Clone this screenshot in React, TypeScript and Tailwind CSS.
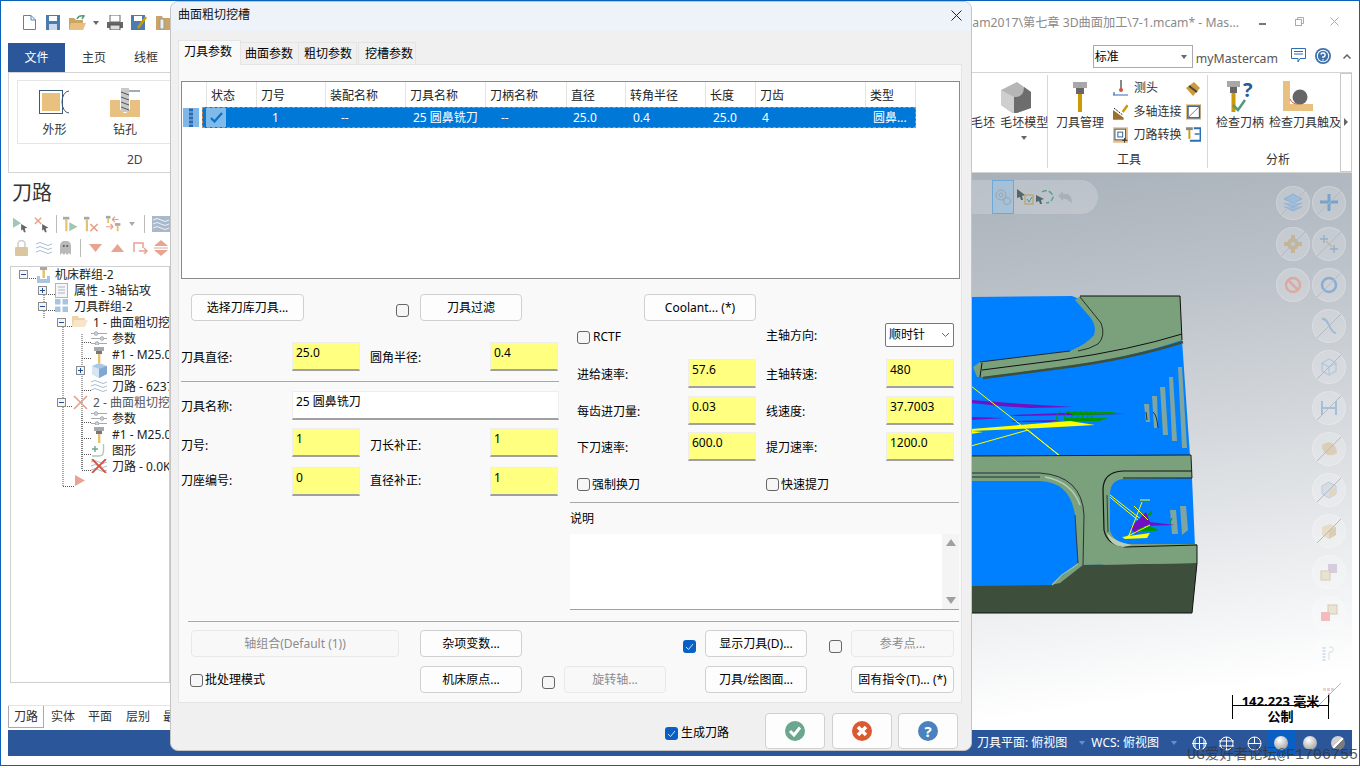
import type { ReactNode } from "react";

function ToolIco({ w = 14, h = 16 }: { w?: number; h?: number }) {
  return (
    <svg width={w} height={h} viewBox="0 0 14 16" className="shrink-0 block">
      <rect x="2" y="0" width="10" height="4" fill="#a8a8a8" />
      <rect x="4" y="4" width="6" height="3" fill="#777" />
      <rect x="6" y="7" width="2.4" height="9" fill="#e5c26c" />
    </svg>
  );
}

function Waves({ color = "#a9bdd4" }: { color?: string }) {
  return (
    <svg width="16" height="14" viewBox="0 0 16 14" className="shrink-0 block" fill="none" stroke={color} strokeWidth="1">
      <path d="M0 3 Q4 0 8 3 T16 3" />
      <path d="M0 7 Q4 4 8 7 T16 7" />
      <path d="M0 11 Q4 8 8 11 T16 11" />
    </svg>
  );
}

function Params() {
  return (
    <svg width="16" height="14" viewBox="0 0 16 14" className="shrink-0 block" stroke="#a9a9a9" fill="#c6d9ec">
      <path d="M0 2.500H16M0 7.500H16M0 12.500H16" />
      <circle cx="5" cy="2.500" r="1.800" />
      <circle cx="11" cy="7.500" r="1.800" />
      <circle cx="6" cy="12.500" r="1.800" />
    </svg>
  );
}

function Expander({ plus }: { plus?: boolean }) {
  return (
    <span className="w-[9px] h-[9px] shrink-0 border border-[#8a8a8a] bg-[#f4f4f4] flex items-center justify-center relative">
      <span className="w-[5px] h-px bg-[#1b4f9c]" />
      {plus && <span className="absolute w-px h-[5px] bg-[#1b4f9c]" />}
    </span>
  );
}

const XIco = () => (
  <svg width="15" height="15" viewBox="0 0 15 15" className="shrink-0 block" stroke="#ea9d87" strokeWidth="1.600">
    <path d="M1 1L14 14M14 1L1 14" />
  </svg>
);

type TreeRow = { left: number; exp?: "plus" | "minus"; icon: ReactNode; iconLeft: number; text?: string; textLeft: number; faded?: boolean };

const treeRows: TreeRow[] = [
  {
    left: 19, exp: "minus", iconLeft: 37, textLeft: 55, text: "机床群组-2",
    icon: <svg width="14" height="16" viewBox="0 0 14 16"><rect x="3" y="0" width="7" height="3" fill="#a8a8a8" /><rect x="5.500" y="3" width="2.400" height="8" fill="#e5c26c" /><path d="M0 9H3V12H10V9H13V16H0Z" fill="#a9c4e0" /></svg>,
  },
  {
    left: 38, exp: "plus", iconLeft: 55, textLeft: 74, text: "属性 - 3轴钻攻",
    icon: <svg width="13" height="15" viewBox="0 0 13 15" fill="#f6f6f6" stroke="#a9b6c4"><rect x="0.500" y="0.500" width="12" height="14" /><path d="M3 4H10M3 7H10M3 10H10" /></svg>,
  },
  {
    left: 38, exp: "minus", iconLeft: 55, textLeft: 74, text: "刀具群组-2",
    icon: <svg width="13" height="13" viewBox="0 0 13 13" fill="#a9c4e0"><rect width="5.500" height="5.500" /><rect x="7.500" width="5.500" height="5.500" /><rect y="7.500" width="5.500" height="5.500" /><rect x="7.500" y="7.500" width="5.500" height="5.500" /></svg>,
  },
  {
    left: 57, exp: "minus", iconLeft: 72, textLeft: 93, text: "1 - 曲面粗切挖",
    icon: <svg width="16" height="12" viewBox="0 0 16 12"><path d="M0 1H6L7 3H13V12H0Z" fill="#eed3a8" /><path d="M2 5H16L13 12H0Z" fill="#f8e5c8" /></svg>,
  },
  { left: 76, iconLeft: 91, textLeft: 112, text: "参数", icon: <Params /> },
  { left: 76, iconLeft: 92, textLeft: 112, text: "#1 - M25.00", icon: <ToolIco /> },
  {
    left: 76, exp: "plus", iconLeft: 92, textLeft: 112, text: "图形",
    icon: <svg width="15" height="15" viewBox="0 0 15 15"><path d="M7 0L15 3V11L7 15L0 11V3Z" fill="#a9c7e6" /><path d="M0 3L7 6V15L0 11Z" fill="#d8e6f4" /><path d="M7 6L15 3V11L7 15Z" fill="#7fa8d0" /></svg>,
  },
  { left: 76, iconLeft: 91, textLeft: 112, text: "刀路 - 6237", icon: <Waves /> },
  { left: 57, exp: "minus", iconLeft: 73, textLeft: 93, text: "2 - 曲面粗切挖", icon: <XIco />, faded: true },
  { left: 76, iconLeft: 91, textLeft: 112, text: "参数", icon: <Params /> },
  { left: 76, iconLeft: 92, textLeft: 112, text: "#1 - M25.00", icon: <ToolIco /> },
  {
    left: 76, iconLeft: 92, textLeft: 112, text: "图形",
    icon: <svg width="15" height="15" viewBox="0 0 15 15" fill="none" stroke="#a8ccb8" strokeWidth="1.400"><path d="M11.500 1V8Q11.500 13 7 13H0" /><path d="M3 3V9M0 6H6" stroke="#6fa98c" /></svg>,
  },
  {
    left: 76, iconLeft: 91, textLeft: 112, text: "刀路 - 0.0K",
    icon: <span className="relative block w-4 h-[14px]"><Waves /><svg width="16" height="14" viewBox="0 0 16 14" className="absolute inset-0" stroke="#d9513a" strokeWidth="1.800"><path d="M1 0L15 14M15 0L1 14" /></svg></span>,
  },
  {
    left: 57, iconLeft: 75, textLeft: 93,
    icon: <svg width="10" height="11" viewBox="0 0 10 11"><path d="M0 0L10 5.500L0 11Z" fill="#e8a393" /></svg>,
  },
];

function Tree() {
  return (
    <div className="mt-[6px] ml-[2px] h-[417px] border border-[#cfcfcf] bg-white relative overflow-hidden">
      {/* connector lines */}
      <svg className="absolute left-0 top-[2px]" width="170" height="240" fill="none" stroke="#555" strokeDasharray="1 1">
        <path d="M14 9.500H26M33 20V50M33 25.500H45M33 41.500H45M52 50V217M52 57.500H62M71 65V201M71 73.500H81M71 89.500H81M71 105.500H74M71 121.500H81M52 137.500H62M71 145V201M71 153.500H81M71 169.500H81M71 185.500H81M71 201.500H81M52 217.500H64" />
      </svg>
      {treeRows.map((r, i) => (
        <div key={i} className="relative h-4 text-[12px] leading-4 text-[#222] whitespace-nowrap first:mt-[3px]">
          {r.exp && <span className="absolute top-[3px]" style={{ left: r.left - 11 }}><Expander plus={r.exp === "plus"} /></span>}
          <span className="absolute top-0" style={{ left: r.iconLeft - 11 }}>{r.icon}</span>
          {r.text && <span className={`absolute top-0 right-0 overflow-hidden ${r.faded ? "text-[#555]" : ""}`} style={{ left: r.textLeft - 11 }}>{r.text}</span>}
        </div>
      ))}
    </div>
  );
}

function LeftToolbars() {
  return (
    <div className="pl-[5px]">
      <div className="flex items-center h-6 gap-[6px] overflow-hidden">
        <svg width="17" height="17" viewBox="0 0 17 17"><path d="M0 1L9 7L0 12Z" fill="#9fc7b2" /><path d="M9 8L16 12L13 13L14 17L12 17L11 14L9 15Z" fill="#666" /></svg>
        <svg width="17" height="17" viewBox="0 0 17 17"><path d="M1 1L8 8M8 1L1 8" stroke="#ea9d87" strokeWidth="1.500" /><path d="M9 8L16 12L13 13L14 17L12 17L11 14L9 15Z" fill="#666" /></svg>
        <span className="w-px h-[18px] bg-[#bbb]" />
        <svg width="17" height="17" viewBox="0 0 17 17"><rect x="0" y="0" width="7" height="3" fill="#a8a8a8" /><rect x="2.500" y="3" width="2.400" height="13" fill="#e5c26c" /><path d="M7 6L16 11L7 16Z" fill="#9fc7b2" /></svg>
        <svg width="17" height="17" viewBox="0 0 17 17"><rect x="0" y="0" width="6" height="3" fill="#a8a8a8" /><rect x="2" y="3" width="2.400" height="13" fill="#e5c26c" /><path d="M7 8L15 16M15 8L7 16" stroke="#ea9d87" strokeWidth="1.800" /></svg>
        <svg width="24" height="18" viewBox="0 0 24 18"><rect x="1" y="0" width="5" height="3" fill="#a8a8a8" /><rect x="2.500" y="3" width="2" height="5" fill="#e5c26c" /><rect x="11" y="8" width="6" height="3" fill="#a8a8a8" /><rect x="13" y="11" width="2" height="6" fill="#e5c26c" /><path d="M8 4H15M8 4L11 1M8 4L11 7M1 12H9M9 12L6 9M9 12L6 15" stroke="#ea9d87" strokeWidth="1.300" fill="none" /></svg>
        <span className="w-0 h-0 -ml-[4px] border-x-[3px] border-x-transparent border-t-[4px] border-t-[#aaa]" />
        <span className="w-px h-[18px] bg-[#bbb] ml-[3px]" />
        <span className="bg-[#a9b9cc] p-px ml-px"><Waves color="#eef2f6" /></span>
      </div>
      <div className="flex items-center h-6 overflow-hidden">
        <svg width="13" height="16" viewBox="0 0 13 16" className="ml-[2px]"><path d="M3 7V4a3.500 3.500 0 0 1 7 0V7" fill="none" stroke="#ccc" strokeWidth="1.500" /><rect y="7" width="13" height="9" rx="1" fill="#dcc6a0" /></svg>
        <span className="ml-2"><Waves /></span>
        <svg width="11" height="14" viewBox="0 0 11 14" className="ml-[8px]"><path d="M0 14V5a5.500 5.500 0 0 1 11 0V14L9 12L7 14L5.500 12L4 14L2 12Z" fill="#b9b9b9" /><circle cx="3.800" cy="5" r="1" fill="#555" /><circle cx="7.200" cy="5" r="1" fill="#555" /></svg>
        <span className="w-px h-[18px] bg-[#bbb] ml-[9px]" />
        <svg width="13" height="8" viewBox="0 0 13 8" className="ml-[8px] shrink-0"><path d="M0 0H13L6.500 8Z" fill="#e8a393" /></svg>
        <svg width="13" height="8" viewBox="0 0 13 8" className="ml-[9px] shrink-0"><path d="M0 8H13L6.500 0Z" fill="#e8a393" /></svg>
        <svg width="15" height="12" viewBox="0 0 15 12" className="ml-[9px] shrink-0" fill="none" stroke="#e8a393" strokeWidth="1.500"><path d="M1 10V1H10V6" /><path d="M6 9H14M11 6L14 9L11 12" /></svg>
        <svg width="14" height="16" viewBox="0 0 14 16" className="ml-[6px] shrink-0"><path d="M0 6L7 0L14 6ZM0 10L7 16L14 10Z" fill="#e8a393" /><path d="M0 8H14" stroke="#e8a393" /></svg>
      </div>
    </div>
  );
}

function Ribbon() {
  return (
    <div className="h-[101px] mx-[7px] flex border border-[#d4d4d4] border-r-0 bg-white text-[12px] text-[#333]">
      <div className="w-[170px] shrink-0">
        <div className="mt-[7px] ml-2 h-[64px] border border-[#e6e6e6] flex">
          <div className="w-[73px] pt-[9px] flex flex-col items-center">
            <svg width="31" height="24" viewBox="0 0 31 24"><rect x="0.500" y="0.500" width="23" height="23" fill="#fff" stroke="#3b5a78" /><rect x="3" y="3" width="18" height="18" fill="#e8c080" /><path d="M30 1A7 11 0 0 0 30 23" fill="none" stroke="#3b5a78" /></svg>
            <span className="mt-[8px] leading-4">外形</span>
          </div>
          <div className="w-[68px] pt-[7px] flex flex-col items-center">
            <svg width="30" height="29" viewBox="0 0 30 29"><path d="M0 12H10V21Q15 29 20 21V12H30V29H0Z" fill="#e8c080" /><rect x="11" y="0" width="8" height="24" fill="#c9c9c9" /><path d="M11 4L19 7M11 9L19 12M11 14L19 17M11 19L19 22" stroke="#555" /><path d="M19 3H30" stroke="#3b5a78" /></svg>
            <span className="leading-4 mt-[5px]">钻孔</span>
          </div>
        </div>
        <div className="mt-[8px] pl-[118px] leading-4 text-[#444]">2D</div>
      </div>
      <div className="flex-1" />
      <div className="w-[76px] shrink-0 relative">
        <svg width="32" height="32" viewBox="0 0 32 32" className="absolute left-[29px] top-[8px]"><path d="M1 9L17 1L31 11L31 27L14 33L1 24Z" fill="#b6b6b6" /><path d="M1 9L14 16L14 33L1 24Z" fill="#cfcfcf" /><path d="M14 16Q24 17 24 6L31 11V27L14 33Z" fill="#6d6d6d" /></svg>
        <div className="absolute left-0 top-[42px] leading-4 whitespace-nowrap">毛坯 <span className="ml-[2px]">毛坯模型</span></div>
        <span className="absolute left-[50px] top-[63px] w-0 h-0 border-x-[3px] border-x-transparent border-t-[4px] border-t-[#666]" />
      </div>
      <div className="w-px mt-[2px] mb-[4px] bg-[#d8d8d8]" />
      <div className="w-[159px] shrink-0 relative">
        <div className="absolute left-[25px] top-[9px]">
          <svg width="14" height="30" viewBox="0 0 14 30"><rect width="14" height="6" fill="#a8a8a8" /><rect x="3" y="6" width="8" height="6" fill="#666" /><rect x="5" y="12" width="4" height="18" fill="#cc9a05" /></svg>
        </div>
        <div className="absolute left-[8px] top-[42px] leading-4">刀具管理</div>
        <div className="absolute left-[65px] top-[7px] w-[88px] flex flex-col gap-[7.500px]">
          <div className="flex h-4 items-center gap-[4px]">
            <svg width="16" height="16" viewBox="0 0 16 16"><path d="M8 0V9" stroke="#888" strokeWidth="2" /><circle cx="8" cy="10" r="2" fill="#d9513a" /><path d="M0 15H15M1 15V12" stroke="#2d6fb5" strokeWidth="1.200" /></svg>
            <span className="leading-4 ml-[1px]">测头</span>
            <svg width="16" height="15" viewBox="0 0 16 15" className="ml-auto"><path d="M1 7L9 1L15 7L8 15Z" fill="#cc9a3a" /><path d="M4 5L12 11" stroke="#444" strokeWidth="2" /></svg>
          </div>
          <div className="flex h-4 items-center gap-[4px]">
            <svg width="16" height="16" viewBox="0 0 16 16"><path d="M0 6L11 14V16H0Z" fill="#9c6e2f" /><path d="M1 4L10 11" stroke="#222" strokeDasharray="2 1" /><path d="M10 8L15 1" stroke="#cc9a05" strokeWidth="2.500" /></svg>
            <span className="leading-4 ml-[1px] whitespace-nowrap">多轴连接</span>
            <svg width="16" height="16" viewBox="0 0 16 16" className="ml-auto"><rect width="16" height="16" fill="#e8c080" /><rect x="2" y="2" width="12" height="12" fill="#fff" stroke="#2d5f99" strokeWidth="1.500" /><path d="M1 15L15 1" stroke="#d9513a" /></svg>
          </div>
          <div className="flex h-4 items-center gap-[4px]">
            <svg width="16" height="16" viewBox="0 0 16 16"><rect width="16" height="16" fill="#e8c080" /><rect x="2" y="2" width="11" height="11" fill="#fff" stroke="#2d5f99" /><rect x="5" y="5" width="5" height="5" fill="none" stroke="#2d5f99" /><path d="M12 11V16M9.500 13.500H15" stroke="#333" /></svg>
            <span className="leading-4 ml-[1px] whitespace-nowrap">刀路转换</span>
            <svg width="16" height="16" viewBox="0 0 16 16" className="ml-auto"><rect width="7" height="3" fill="#888" /><rect x="2.500" y="3" width="2" height="9" fill="#cc9a05" /><path d="M8 1H15V14H4" fill="none" stroke="#2d6fb5" strokeWidth="2" /><path d="M9 7H14" stroke="#2d6fb5" strokeWidth="1.500" /></svg>
          </div>
        </div>
        <div className="absolute left-[69px] top-[79px] leading-4">工具</div>
      </div>
      <div className="w-px mt-[2px] mb-[4px] bg-[#d8d8d8]" />
      <div className="w-[132px] shrink-0 relative whitespace-nowrap">
        <svg width="30" height="32" viewBox="0 0 30 32" className="absolute left-[19px] top-[8px]"><rect width="13" height="6" fill="#a8a8a8" /><rect x="3" y="6" width="7" height="6" fill="#666" /><rect x="4.500" y="12" width="4" height="19" fill="#cc9a05" /><path d="M6 24L11 29L18 19" fill="none" stroke="#4f9b7c" strokeWidth="2.500" /></svg>
        <span className="absolute left-[35px] top-[1px] text-[20px] font-bold text-[#2b5c91] leading-[32px]">?</span>
        <svg width="30" height="30" viewBox="0 0 30 30" className="absolute left-[75px] top-[8px]"><path d="M0 0H7V23H30V30H0Z" fill="#e8c080" /><circle cx="17" cy="16" r="7.500" fill="#666" /><path d="M7 18Q9 23 15 23" fill="none" stroke="#d9513a" /></svg>
        <span className="absolute left-[8px] top-[42px] leading-4">检查刀柄</span>
        <span className="absolute left-[61px] top-[42px] leading-4">检查刀具触及</span>
        <span className="absolute left-[58px] top-[79px] leading-4">分析</span>
      </div>
      <div className="w-[12px] shrink-0 border border-[#c9c9c9] flex items-center justify-center pb-[1px]">
        <span className="w-0 h-0 border-y-[4px] border-y-transparent border-l-[4px] border-l-[#666]" />
      </div>
    </div>
  );
}

const roundIcons: ReactNode[] = [
  <path key="a" d="M3 11H21M12 3V20" stroke="#5e94c9" strokeWidth="3" />,
  <g key="b" stroke="#7fa4c8" strokeWidth="1.400"><path d="M7 3V11M3 7H11M17 13V21M13 17H21" /><path d="M9 9L15 15" stroke="#c4ad80" /></g>,
  <g key="c" fill="none" stroke="#6f9fd0" strokeWidth="2.500"><circle cx="12" cy="12" r="7" /></g>,
  <path key="d" d="M5 5C12 3 12 19 19 19" fill="none" stroke="#8db0d0" strokeWidth="2" />,
  <path key="e" d="M5 8L12 4L19 8V16L12 20L5 16ZM5 8L12 12L19 8M12 12V20" fill="none" stroke="#a9c2da" strokeWidth="1.400" />,
  <path key="f" d="M5 5V19M19 5V19M5 12H19" fill="none" stroke="#8fb2d2" strokeWidth="2" />,
  <path key="g" d="M5 8Q12 3 16 7T20 16Q13 20 9 17T5 8" fill="#d9c6a4" />,
  <g key="h"><path d="M5 8L12 4L19 8V16L12 20L5 16Z" fill="#cfd9e2" stroke="#a9c2da" /><path d="M12 12L19 8V16L12 20Z" fill="#e2cfb0" /></g>,
  <g key="i"><path d="M5 8L13 5L19 8V16L12 20L5 16Z" fill="#e4d6b8" /><path d="M12 11L19 8V16L12 20Z" fill="#d4c09a" /></g>,
  <g key="j"><rect x="11" y="4" width="9" height="9" fill="#cbbcd6" /><rect x="4" y="11" width="9" height="9" fill="#e6dcc6" stroke="#c9b998" /></g>,
  <g key="k"><rect x="11" y="4" width="9" height="9" fill="#e6dcc6" stroke="#c9b998" /><rect x="4" y="11" width="9" height="9" fill="#f3a3a6" /></g>,
  <g key="l"><path d="M7 5V20" stroke="#c6d8ea" strokeWidth="3" strokeDasharray="2 1" /><path d="M12 5H15Q18 7 15 10H12V18" fill="none" stroke="#c9d4de" /></g>,
  <g key="m"><rect x="6" y="5" width="3" height="3" fill="#e8c9b0" /><rect x="10" y="5" width="3" height="3" fill="#e6b9b9" /><rect x="14" y="5" width="3" height="3" fill="#bcd0c4" /><path d="M12 10V20" stroke="#c04060" /></g>,
];

function RoundBtn({ children, slash = true }: { children: ReactNode; slash?: boolean }) {
  return (
    <span className="w-[34px] h-[34px] rounded-full bg-white/20 border border-white/20 relative flex items-center justify-center">
      <svg width="24" height="24" viewBox="0 0 24 24" className="opacity-70">{children}</svg>
      {slash && <svg width="34" height="34" viewBox="0 0 34 34" className="absolute -inset-px"><path d="M5 29L29 5" stroke="#b3bac1" strokeWidth="1" /></svg>}
    </span>
  );
}

function CadDrawing() {
  return (
    <svg className="absolute inset-0" width="1182" height="557" viewBox="170 173 1182 557">
      <path d="M971 297L1072 296L1182 340L1190 456L1192 478L1195 546L1100 565L1060 586L971 586Z" fill="#0080ff" />
      {/* upper rib */}
      <path d="M1075 300L1080 296L1180 296L1182 340Q1130 358 1060 367L983 377L977 377L973 367L980 362L1070 351Q1087 344 1094 335Q1097 326 1090 317Z" fill="#7aa07c" />
      <path d="M1080 296H1180L1182 340" fill="none" stroke="#111" />
      <path d="M1183 342Q1130 359 1060 368L983 378" fill="none" stroke="#3d4f3a" strokeWidth="2.500" />
      <path d="M982 370L1060 360Q1130 350 1182 334" fill="none" stroke="#111" />
      <path d="M980 362L1070 351M1080 297L1101 323Q1106 336 1098 344Q1090 349 1078 351" fill="none" stroke="#111" strokeWidth="0.800" />
      <path d="M982 363L980 377" stroke="#111" />
      {/* stepped walls */}
      {[
        "M1178 367L1182 367L1187 448L1182 448Z",
        "M1169 377L1173 377L1177 441L1172 441Z",
        "M1160 387L1165 387L1168 435L1163 435Z",
        "M1152 396L1157 396L1158 428L1154 428Z",
        "M1144 404L1149 404L1150 422L1146 422Z",
      ].map((d) => (
        <path key={d} d={d} fill="#7fa5a0" />
      ))}
      <path d="M1153 412Q1157 415 1158 428M1146 412L1147 420" fill="none" stroke="#111" strokeWidth="0.800" />
      {/* tool motion */}
      <path d="M971 400L1010 403L1073 407L1030 408L1000 406L971 403Z" fill="#7010c0" />
      <path d="M1010 415L1090 412L1125 414L1080 415L1015 416Z" fill="#7010c0" />
      <path d="M971 417L1005 418L971 420ZM1010 421L1060 420L1050 422L1015 422Z" fill="#7010c0" />
      <path d="M1065 412L1112 412L1120 414L1075 415ZM1065 418L1108 418L1100 421L1065 421Z" fill="#009a00" />
      {[1055, 1063, 1070, 1076, 1081, 1086, 1090].map((x) => (
        <path key={x} d={`M${x + 6} 411Q${x} 414 ${x + 2} 421`} fill="none" stroke="#009a00" />
      ))}
      <path d="M971 429L1045 423L1070 421L1095 425L1040 428L971 431Z" fill="#ffff00" />
      <path d="M971 431L983 432L971 434Z" fill="#ffff00" />
      <path d="M971 386L1142 520M971 446L1028 430M1028 430L1150 530" stroke="#ffff00" strokeWidth="1" fill="none" />
      {/* lower rib */}
      <path d="M971 456L1191 455L1192 478L1123 479Q1110 480 1110 495L1110 530Q1113 542 1127 544L1197 544L1197 563L1083 565L1060 584L1050 586L1052 585L1078 563L1075 515Q1070 482 1040 481L971 481Z" fill="#7aa07c" />
      <path d="M971 456L1191 455L1192 478M1123 478H1192" fill="none" stroke="#111" strokeWidth="0.900" />
      <path d="M971 473H1040Q1082 476 1084 515L1083 565M971 477H1040" fill="none" stroke="#223" strokeWidth="0.900" />
      <path d="M1192 471L1123 471Q1103 472 1103 490L1104 530Q1107 545 1125 547L1197 545" fill="none" stroke="#111" strokeWidth="1.200" />
      <path d="M1107 495L1108 532M1075 515L1078 563" stroke="#223" strokeWidth="0.800" />
      <path d="M1107 533Q1115 542 1132 545L1123 547Q1110 546 1107 533Z" fill="#b7cdb5" />
      <path d="M1045 477Q1072 482 1080 505" fill="none" stroke="#b4cfb4" strokeWidth="1.500" />
      {/* front face */}
      <path d="M1083 565L1197 563L1192 613L971 613L971 586L1050 585L1060 583Z" fill="#3d4f3a" />
      <path d="M1197 545V563L1192 613H971" fill="none" stroke="#111" />
      <path d="M1052 585L1062 575L1078 564" stroke="#9dbb9d" strokeWidth="1.500" fill="none" />
      {/* pocket detail */}
      <path d="M1180 506L1186 506L1188 530L1182 535ZM1170 510L1176 510L1178 534L1172 534Z" fill="#7fa5a0" />
      <path d="M1122 537L1150 533L1147 538L1125 539Z" fill="#ffff00" />
      <path d="M1130 528L1146 512L1150 522L1175 525L1145 526L1136 534Z" fill="#7010c0" />
      <path d="M1137 530L1148 526L1158 530L1144 531ZM1148 516L1150 511L1152 514M1170 523L1172 518" stroke="#009a00" fill="#009a00" />
      <path d="M1142 502L1128 538M1134 506L1148 520M1126 537L1150 525M1140 500H1150" stroke="#ffff00" fill="none" />
    </svg>
  );
}

function Viewport() {
  return (
    <div className="flex-1 relative overflow-hidden bg-[linear-gradient(172deg,#98a3ae_0%,#bcc2c9_35%,#dfe2e5_65%,#ffffff_92%)]">
      <CadDrawing />
      {/* selection toolbar */}
      <div className="absolute left-[790px] top-[7px] w-[138px] h-[34px] rounded-r-[17px] bg-white/20 flex items-center pl-[32px]">
        <span className="w-[22px] h-[34px] bg-[#9dc0dc]/70 border border-[#6fa7d6] flex items-center justify-center">
          <svg width="16" height="16" viewBox="0 0 16 16" fill="none" stroke="#9aa5ae"><circle cx="6" cy="6" r="5" /><circle cx="6" cy="6" r="2" /><circle cx="12" cy="12" r="3.500" /></svg>
        </span>
        <svg width="18" height="16" viewBox="0 0 18 16" className="ml-[3px]"><path d="M0 0L8 6L5 7L6 11L4 11L3 8L0 9Z" fill="#566" /><rect x="8" y="6" width="8" height="9" fill="none" stroke="#b79a5d" /><path d="M10 10L12 13L15 8" stroke="#4f9b7c" fill="none" /></svg>
        <svg width="18" height="16" viewBox="0 0 18 16" className="ml-[1px]"><path d="M0 6L8 10L5 11L6 15L4 15L3 12L0 13Z" fill="#566" /><path d="M6 3A7 7 0 0 1 17 8A7 7 0 0 1 10 14" fill="none" stroke="#5f9f86" strokeWidth="1.500" strokeDasharray="5 2" /></svg>
        <svg width="18" height="16" viewBox="0 0 18 16" className="ml-[3px]"><path d="M1 7L6 2V5H11L14 8L15 14L9 10L6 10V12Z" fill="#a9b0b6" /></svg>
      </div>
      {/* overlay buttons */}
      <div className="absolute right-[6px] top-[13px] flex gap-[2px]">
        <div className="flex flex-col gap-[7px]">
          <RoundBtn><path d="M12 3L21 8L12 12L3 8ZM3 12L12 16L21 12M3 15.500L12 20L21 15.500" fill="#8fb7e0" stroke="#7aa7d5" /></RoundBtn>
          <RoundBtn><g fill="#c4ad80"><circle cx="12" cy="12" r="6" /><circle cx="12" cy="12" r="2" fill="#ccc" /><path d="M10 3H14V7H10ZM10 17H14V21H10ZM3 10H7V14H3ZM17 10H21V14H17Z" /></g></RoundBtn>
          <RoundBtn slash={false}><g fill="none" stroke="#e39a8a" strokeWidth="2.500"><circle cx="12" cy="12" r="7" /><path d="M7 7L17 17" /></g></RoundBtn>
        </div>
        <div className="flex flex-col gap-[7px]">
          {roundIcons.map((ic, i) => (
            <RoundBtn key={i} slash={i !== 9 && i !== 10 && i !== 11}>{ic}</RoundBtn>
          ))}
        </div>
      </div>
      {/* scale bar */}
      <div className="absolute left-[1062px] top-[522px] w-[97px] h-[24px] border-x border-black text-black text-[13px] leading-[12px] font-bold text-center whitespace-nowrap">
        <div className="h-[11px] border-b border-black -mb-px">142.223 毫米</div>
        <div className="mt-[5px]">公制</div>
      </div>
    </div>
  );
}

function Wire({ d }: { d: string }) {
  return (
    <svg width="15" height="15" viewBox="0 0 15 15" fill="none" stroke="#fff" className="block">
      <circle cx="7.500" cy="7.500" r="6.500" />
      <path d={d} />
    </svg>
  );
}

const Sphere = () => <span className="block w-[14px] h-[14px] rounded-full bg-[radial-gradient(circle_at_40%_30%,#ffffff,#a8a8a8_75%)]" />;

function StatusBar() {
  return (
    <div className="h-[26px] mx-[7px] bg-[#2b579a] flex items-center text-[12px] text-white whitespace-nowrap">
      <span className="ml-[969px]">刀具平面: 俯视图</span>
      <span className="ml-[12px] w-0 h-0 border-x-[3px] border-x-transparent border-t-[4px] border-t-[#6d8fc0]" />
      <span className="ml-[6px]">WCS: 俯视图</span>
      <span className="ml-[12px] w-0 h-0 border-x-[3px] border-x-transparent border-t-[4px] border-t-[#6d8fc0]" />
      <span className="ml-[15px]"><Wire d="M0 7.500H15M7.500 1V14M3 3V12M12 3V12" /></span>
      <span className="ml-[12px]"><Wire d="M0 5H15M0 10H15M7.500 1V14" /></span>
      <span className="ml-[13px]"><Wire d="M1 7.500H14M7.500 1V8" /></span>
      <span className="ml-[6px] w-[27px] h-[26px] bg-[#0a5fc4] flex items-center justify-center"><Sphere /></span>
      <span className="ml-[8px]"><Sphere /></span>
      <span className="ml-[14px] w-[14px] h-[14px] rounded-full bg-[linear-gradient(135deg,#d0d0d0_45%,#ffffff_45%,#ffffff_55%,#7c7c7c_55%)]" />
    </div>
  );
}

function Btn({ w, children, disabled }: { w: number; children: ReactNode; disabled?: boolean }) {
  return (
    <button
      style={{ width: w }}
      className={`block h-[27px] shrink-0 rounded-[4px] border text-[12px] whitespace-nowrap ${disabled ? "border-[#e8e8e8] bg-[#f8f8f8] text-[#8c8c8c]" : "border-[#d0d0d0] bg-[#fdfdfd] text-black"}`}
    >
      {children}
    </button>
  );
}

function Check({ checked }: { checked?: boolean }) {
  if (checked)
    return (
      <span className="block w-[13px] h-[13px] shrink-0 rounded-[3px] bg-[#0a5fc4]">
        <svg width="13" height="13" viewBox="0 0 13 13" fill="none" stroke="#cfe2f7" className="block"><path d="M3 7L5.500 9.500L10 4" /></svg>
      </span>
    );
  return <span className="block w-[13px] h-[13px] shrink-0 rounded-[3px] border border-[#666] bg-[#f6f6f6]" />;
}

function Field({ value, w = 68 }: { value: string; w?: number }) {
  return (
    <div style={{ width: w }} className="h-[29px] shrink-0 border border-[#eeeeee] border-b-2 border-b-[#a0a0a0] bg-[#ffff80] pl-[3px] text-[12px] leading-[20px] text-black">
      {value}
    </div>
  );
}

function LeftRow({ l1, v1, l2, v2, className, labelClass = "pt-[2px]" }: { l1: string; v1: string; l2?: string; v2?: string; className?: string; labelClass?: string }) {
  return (
    <div className={`flex items-center h-[29px] text-[12px] text-black ${className ?? ""}`}>
      <span className={`w-[111px] ${labelClass}`}>{l1}</span>
      <Field value={v1} />
      {l2 && <span className={`ml-[10px] w-[120px] ${labelClass}`}>{l2}</span>}
      {v2 && <Field value={v2} />}
    </div>
  );
}

function RightRow({ l1, v1, l2, v2, className }: { l1: string; v1: string; l2: string; v2: string; className?: string }) {
  return (
    <div className={`flex items-center h-[29px] text-[12px] text-black pl-[7px] ${className ?? ""}`}>
      <span className="w-[111px] pt-[2px]">{l1}</span>
      <Field value={v1} />
      <span className="ml-[10px] w-[120px] pt-[2px]">{l2}</span>
      <Field value={v2} />
    </div>
  );
}

const headers: [string, number][] = [
  ["", 25], ["状态", 50], ["刀号", 69], ["装配名称", 80], ["刀具名称", 80], ["刀柄名称", 81],
  ["直径", 59], ["转角半径", 80], ["长度", 50], ["刀齿", 110], ["类型", 50],
];

const cells: [string, number][] = [
  ["1", 110], ["--", 72], ["25 圆鼻铣刀", 88], ["--", 72], ["25.0", 60], ["0.4", 80], ["25.0", 49], ["4", 111], ["圆鼻...", 40],
];

function ToolTable() {
  return (
    <div className="ml-[2px] mt-4 h-[198px] w-[779px] border border-[#8a8a8a] bg-white text-[12px]">
      <div className="flex h-[25px] leading-[27px] text-[#222]">
        {headers.map(([h, w], i) => (
          <div key={i} style={{ width: w }} className="pl-[4px] border-r border-[#e4e4e4] shrink-0">{h}</div>
        ))}
      </div>
      <div className="flex h-[21px] relative">
        <span className="ml-[1px] mt-[1px] w-4 h-[19px] bg-[#7fb6e8] flex justify-center shrink-0">
          <span className="w-[4px] h-full bg-[repeating-linear-gradient(0deg,#2b6aa8_0,#2b6aa8_2px,#5c93c8_2px,#5c93c8_4px)]" />
        </span>
        <div className="ml-[3px] w-[714px] h-[21px] bg-[#0078d7] border border-dashed border-[#d98a4a] flex items-center text-white">
          <span className="ml-[3px] w-[20px] h-[19px] bg-[#7fbae8] flex items-center justify-center shrink-0 mr-[5px]">
            <svg width="13" height="11" viewBox="0 0 13 11" fill="none" stroke="#0c6fc8" strokeWidth="2.200"><path d="M1 6L4.500 9.500L12 1" /></svg>
          </span>
          {cells.map(([c, w], i) => (
            <span key={i} style={{ width: w }} className={`shrink-0 whitespace-nowrap ${i === 0 ? "pl-[41px]" : ""}`}>{c}</span>
          ))}
        </div>
      </div>
    </div>
  );
}

function FooterBtn({ children }: { children: ReactNode }) {
  return (
    <button className="w-[60px] h-[36px] rounded-[4px] border border-[#d0d0d0] bg-[#fdfdfd] flex items-center justify-center">
      {children}
    </button>
  );
}

function Dialog() {
  return (
    <div className="absolute left-[170px] top-[1px] w-[802px] h-[750px] rounded-[8px] border border-[#c4c4c4] bg-[#f0f0f0] overflow-hidden flex flex-col text-[12px] text-black">
      <div className="h-[29px] shrink-0 bg-[#eef3fa] flex items-center justify-between pl-[7px] pr-[9px] text-[#111] pb-[3px]">
        <span>曲面粗切挖槽</span>
        <svg width="11" height="11" viewBox="0 0 11 11" stroke="#222"><path d="M0.500 0.500L10.500 10.500M10.500 0.500L0.500 10.500" /></svg>
      </div>
      <div className="flex items-end ml-[7px] mt-[9px] h-[25px] relative z-10 leading-[22px]">
        <div className="w-[63px] h-[25px] bg-[#f9f9f9] border border-b-0 border-[#e4e4e4] pl-[5px] leading-[22px]">刀具参数</div>
        <div className="w-[58px] h-[22px] bg-[#f0f0f0] border-r border-t border-[#e4e4e4] mb-px pl-[4px]">曲面参数</div>
        <div className="w-[58px] h-[22px] bg-[#f0f0f0] border-r border-t border-[#e4e4e4] mb-px pl-[5px]">粗切参数</div>
        <div className="ml-[1px] w-[58px] h-[22px] bg-[#f0f0f0] border-r border-t border-l border-[#e4e4e4] mb-px pl-[6px]">挖槽参数</div>
      </div>
      <div className="ml-[7px] -mt-px w-[784px] h-[639px] border border-[#e4e4e4] bg-[#f9f9f9]">
        <ToolTable />
        <div className="flex ml-[2px] mt-[15px]">
          {/* left column */}
          <div className="w-[378px]">
            <div className="flex">
              <span className="ml-[10px]"><Btn w={113}>选择刀库刀具...</Btn></span>
              <span className="ml-[92px] mt-[10px]"><Check /></span>
              <span className="ml-[11px]"><Btn w={102}>刀具过滤</Btn></span>
            </div>
            <LeftRow className="mt-[21px]" l1="刀具直径:" v1="25.0" l2="圆角半径:" v2="0.4" />
            <div className="mt-[10px] h-px bg-[#a8a8a8]" />
            <div className="mt-[9px] flex items-center h-[29px]">
              <span className="w-[111px] pt-[2px]">刀具名称:</span>
              <div className="w-[267px] h-[29px] border border-[#eeeeee] border-b-2 border-b-[#a0a0a0] bg-white pl-[3px] leading-[20px]">25 圆鼻铣刀</div>
            </div>
            <LeftRow className="mt-[8px]" labelClass="pt-[6px]" l1="刀号:" v1="1" l2="刀长补正:" v2="1" />
            <LeftRow className="mt-[10px]" labelClass="pb-[2px]" l1="刀座编号:" v1="0" l2="直径补正:" v2="1" />
          </div>
          {/* right column */}
          <div className="ml-[11px] w-[389px]">
            <div className="ml-[74px]"><Btn w={112}>Coolant... (*)</Btn></div>
            <div className="mt-[2px] h-[24px] flex items-center">
              <span className="ml-[7px] flex items-center gap-[3px] w-[189px] pt-[4px]"><Check />RCTF</span>
              <span className="w-[119px] pt-[2px]">主轴方向:</span>
              <div className="w-[69px] h-[24px] border border-[#777] rounded-[2px] bg-white flex items-center justify-between pl-[3px] pr-[3px]">
                顺时针
                <svg width="9" height="6" viewBox="0 0 9 6" fill="none" stroke="#666"><path d="M1 1L4.500 4.500L8 1" /></svg>
              </div>
            </div>
            <RightRow className="mt-[12px]" l1="进给速率:" v1="57.6" l2="主轴转速:" v2="480" />
            <RightRow className="mt-[8px]" l1="每齿进刀量:" v1="0.03" l2="线速度:" v2="37.7003" />
            <RightRow className="mt-[7px]" l1="下刀速率:" v1="600.0" l2="提刀速率:" v2="1200.0" />
            <div className="mt-[17px] h-[13px] flex items-center pl-[7px]">
              <span className="w-[189px] flex items-center gap-[2px]"><Check />强制换刀</span>
              <span className="flex items-center gap-[2px]"><Check />快速提刀</span>
            </div>
            <div className="mt-[11px] h-px bg-[#a8a8a8]" />
            <div className="mt-[8px] h-4 leading-4">说明</div>
            <div className="mt-[7px] h-[76px] bg-white border-b border-[#a0a0a0] flex justify-end">
              <div className="w-[17px] bg-[#f4f4f4] flex flex-col justify-between items-center py-[5px]">
                <span className="w-0 h-0 border-x-[5px] border-x-transparent border-b-[7px] border-b-[#a0a0a0]" />
                <span className="w-0 h-0 border-x-[5px] border-x-transparent border-t-[7px] border-t-[#a0a0a0]" />
              </div>
            </div>
          </div>
        </div>
        <div className="mt-[11px] ml-[9px] w-[771px] h-px bg-[#a8a8a8]" />
        <div className="flex mt-[8px]">
          <span className="ml-[12px]"><Btn w={208} disabled>轴组合(Default (1))</Btn></span>
          <span className="ml-[21px]"><Btn w={102}>杂项变数...</Btn></span>
          <span className="ml-[161px] mt-[10px]"><Check checked /></span>
          <span className="ml-[9px]"><Btn w={102}>显示刀具(D)...</Btn></span>
          <span className="ml-[22px] mt-[10px]"><Check /></span>
          <span className="ml-[9px]"><Btn w={103} disabled>参考点...</Btn></span>
        </div>
        <div className="flex mt-[9px]">
          <span className="ml-[11px] w-[230px] flex items-center gap-[2px] pt-[1px]"><Check />批处理模式</span>
          <Btn w={102}>机床原点...</Btn>
          <span className="ml-[20px] mt-[10px]"><Check /></span>
          <span className="ml-[9px]"><Btn w={102} disabled>旋转轴...</Btn></span>
          <span className="ml-[39px]"><Btn w={102}>刀具/绘图面...</Btn></span>
          <span className="ml-[44px]"><Btn w={103}>固有指令(T)... (*)</Btn></span>
        </div>
      </div>
      <div className="flex items-start pl-[494px] pt-[10px]">
        <span className="flex items-center gap-[3px] w-[100px] mt-[11px]"><Check checked />生成刀路</span>
        <FooterBtn><svg width="20" height="20" viewBox="0 0 20 20"><circle cx="10" cy="10" r="10" fill="#6aa78e" /><path d="M5 10L9 14L15 6.500" fill="none" stroke="#fff" strokeWidth="3" /></svg></FooterBtn>
        <span className="ml-[7px]"><FooterBtn><svg width="20" height="20" viewBox="0 0 20 20"><circle cx="10" cy="10" r="10" fill="#dc5a32" /><path d="M6 6L14 14M14 6L6 14" fill="none" stroke="#fff" strokeWidth="3.500" /></svg></FooterBtn></span>
        <span className="ml-[6px]"><FooterBtn><span className="w-5 h-5 rounded-full bg-[#4a82bd] text-white font-bold text-[15px] leading-5 text-center">?</span></FooterBtn></span>
      </div>
    </div>
  );
}

function QuickAccess() {
  return (
    <div className="absolute left-[22px] top-[14px] flex items-center">
      <svg width="13" height="15" viewBox="0 0 13 15" fill="#fff" stroke="#5585b8"><path d="M0.500 0.500H8L12.500 5V14.500H0.500ZM8 0.500V5H12.500" /></svg>
      <svg width="14" height="15" viewBox="0 0 14 15" className="ml-[10px]"><rect width="14" height="15" fill="#4a7cb0" /><rect x="3" y="1" width="8" height="5" fill="#fff" /><rect x="3" y="9" width="8" height="6" fill="#c9d9ea" /></svg>
      <svg width="17" height="15" viewBox="0 0 17 15" className="ml-[9px]"><path d="M0 3H5L7 5H14V15H0Z" fill="#caa566" /><path d="M2 8H17L14 15H0Z" fill="#e8c080" /><path d="M8 4Q10 0 14 1M12 0L15 1L13 4" fill="none" stroke="#4f9b7c" strokeWidth="1.500" /></svg>
      <span className="ml-[7px] w-0 h-0 border-x-[3px] border-x-transparent border-t-[4px] border-t-[#666]" />
      <svg width="16" height="15" viewBox="0 0 16 15" className="ml-[8px]"><rect x="3" y="0" width="10" height="7" fill="#fff" stroke="#666" /><rect y="7" width="16" height="6" fill="#666" /><rect x="3" y="10" width="10" height="5" fill="#ddd" stroke="#555" /></svg>
      <svg width="16" height="15" viewBox="0 0 16 15" className="ml-[8px]"><rect width="14" height="15" fill="#4a7cb0" /><rect x="3" y="1" width="8" height="5" fill="#fff" /><path d="M7 13L15 2" stroke="#cc9a05" strokeWidth="2.500" /></svg>
      <svg width="15" height="15" viewBox="0 0 15 15" className="ml-[9px]"><path d="M0 1H6L7 3H15V15H0Z" fill="#caa566" /><rect x="4" y="4" width="4" height="10" fill="#eee" stroke="#999" /></svg>
    </div>
  );
}

export default function App() {
  return (
    <div className="w-[1360px] h-[768px] relative overflow-hidden bg-white [font-family:'Noto_Sans','Noto_Sans_CJK_SC',sans-serif]">
      <div className="w-[1360px] h-[766px] border border-[#0a62b8] bg-white flex flex-col relative">
        <QuickAccess />
        {/* title row */}
        <div className="h-[42px] shrink-0 flex items-center justify-end text-[#8a8a8a] text-[12.200px] whitespace-nowrap pt-[3px]">
          <span>am2017\第七章 3D曲面加工\7-1.mcam* - Mas...</span>
          <span className="ml-[20px] w-[7px] h-[2px] bg-[#777]" />
          <svg width="9" height="9" viewBox="0 0 9 9" className="ml-[29px] -mt-[5px]" fill="none" stroke="#aaa"><rect x="0.500" y="2.500" width="6" height="6" /><path d="M2.500 2.500V0.500H8.500V6.500H6.500" /></svg>
          <svg width="9" height="9" viewBox="0 0 9 9" className="ml-[26px] mr-[20px] -mt-[5px]" stroke="#aaa"><path d="M0.500 0.500L8.500 8.500M8.500 0.500L0.500 8.500" /></svg>
        </div>
        {/* ribbon tabs */}
        <div className="h-[29px] shrink-0 mx-[7px] flex items-center text-[12px] text-[#333] relative">
          <span className="w-[57px] h-[29px] bg-[#2b579a] text-white flex items-center justify-center">文件</span>
          <span className="ml-[17px]">主页</span>
          <span className="ml-[28px]">线框</span>
          <div className="ml-auto flex items-center mr-[1px]">
            <div className="w-[100px] h-[23px] border border-[#aaa] bg-white flex items-center justify-between pl-[1px] pr-[5px] text-[12px] text-black -mt-[2px]">
              标准
              <span className="w-0 h-0 border-x-[3px] border-x-transparent border-t-[4px] border-t-[#666]" />
            </div>
            <span className="ml-[3px] text-[#555] text-[12.300px] mt-[4px]">myMastercam</span>
            <svg width="15" height="15" viewBox="0 0 15 15" className="ml-[13px] -mt-[4px]" fill="#fff" stroke="#2d6fb5"><path d="M0.500 0.500H14.500V10.500H9L7 14V10.500H0.500ZM3 3.500H12M3 6H12" /></svg>
            <svg width="16" height="16" viewBox="0 0 16 16" className="ml-[9px] -mt-[4px]"><circle cx="8" cy="8" r="8" fill="#3d72ad" /><circle cx="8" cy="8" r="6.200" fill="#fff" /><circle cx="8" cy="8" r="5.200" fill="#3d72ad" /><path d="M5.800 6.500A2.200 2 0 1 1 8 9V10M8 11.200V12.600" stroke="#fff" strokeWidth="1.400" fill="none" /></svg>
            <svg width="8" height="5" viewBox="0 0 8 5" className="ml-[12px] -mt-[3px]" fill="none" stroke="#666" strokeWidth="1.500"><path d="M0.500 4.500L4 1L7.500 4.500" /></svg>
          </div>
        </div>
        <Ribbon />
        {/* middle */}
        <div className="h-[557px] shrink-0 mx-[7px] flex">
          <div className="w-[162px] shrink-0 flex flex-col bg-white">
            <div className="h-[39px] pl-1 pt-[5px] text-[20px] leading-[30px] text-[#333]">刀路</div>
            <LeftToolbars />
            <Tree />
            <div className="mt-[22px] h-[22px] border-t border-[#e4e4e4] flex text-[12px] text-[#333] leading-[22px] whitespace-nowrap">
              <span className="w-9 h-[22px] shrink-0 border-x border-b border-[#aaa] bg-white text-center">刀路</span>
              <span className="ml-[7px] shrink-0">实体</span>
              <span className="ml-[13px] shrink-0">平面</span>
              <span className="ml-[14px] shrink-0">层别</span>
              <span className="ml-[13px] shrink-0">最</span>
            </div>
          </div>
          <Viewport />
        </div>
        <StatusBar />
      </div>
      <Dialog />
      <div className="absolute left-[1187px] top-[745px] text-[#333]/80 text-[15px] leading-[20px] whitespace-nowrap [font-family:'Liberation_Mono','Noto_Sans_CJK_SC',monospace]">
        UG<span className="text-[14.400px]">爱好者论坛</span>@F1706755
      </div>
    </div>
  );
}
